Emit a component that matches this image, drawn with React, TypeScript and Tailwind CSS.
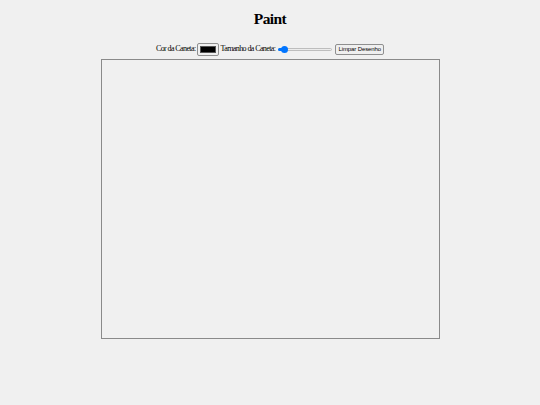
export default function App() {
  return (
    <div className="min-h-screen bg-[#f0f0f0] flex flex-col items-center text-black" style={{ fontFamily: '"Liberation Serif", "Times New Roman", serif' }}>
      <h1 className="mt-[11px] text-[15.5px] leading-[15px] font-bold tracking-[-0.6px]">Paint</h1>

      <div className="mt-[16px] h-[14px] flex items-center text-[8px] tracking-[-0.6px] leading-none">
        <label className="mr-[1px]">Cor da Caneta:</label>
        <div className="w-[22px] h-[13px] border border-[#8f8f8f] rounded-[2px] bg-[#efefef] px-[2px] py-[2px] mr-[2px]">
          <div className="w-full h-full bg-black border border-[#555]" />
        </div>
        <label className="mr-[3px]">Tamanho da Caneta:</label>
        <div className="relative w-[54px] h-[7px] flex items-center mr-[3px]">
          <div className="w-full h-[3px] rounded-full bg-[#ececec] border border-[#bdbdbd]" />
          <div className="absolute left-0 top-[2px] w-[5px] h-[3px] rounded-l-full bg-[#0075ff]" />
          <div className="absolute left-[3px] top-0 w-[7px] h-[7px] rounded-full bg-[#0075ff]" />
        </div>
        <button
          className="h-[11px] px-[2px] border border-[#8f8f8f] rounded-[2px] bg-[#efefef] text-[6px] tracking-[-0.1px] leading-none"
          style={{ fontFamily: '"Liberation Sans", Arial, sans-serif' }}
        >
          Limpar Desenho
        </button>
      </div>

      <div className="mt-[3px] w-[339px] h-[280px] border-[1.5px] border-[#8a8a8a] bg-[#f0f0f0]" />
    </div>
  )
}
